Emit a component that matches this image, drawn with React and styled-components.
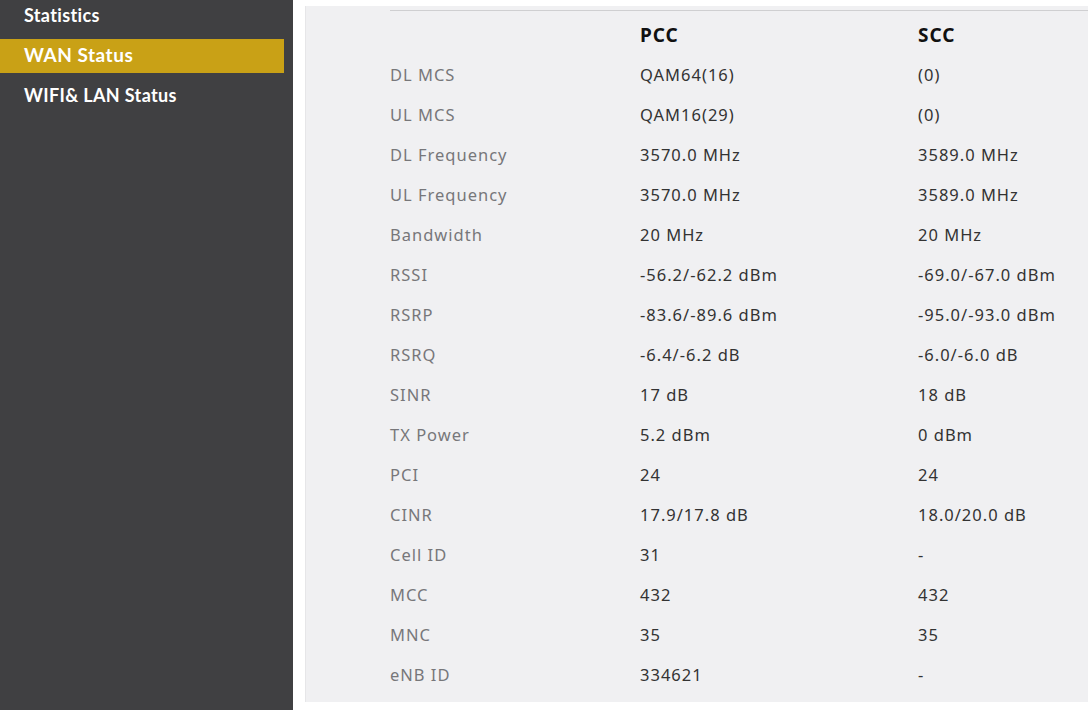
import React from "react";
import styled, { createGlobalStyle } from "styled-components";

const Global = createGlobalStyle`
  html, body {
    margin: 0;
    padding: 0;
    background: #ffffff;
    overflow: hidden;
  }
`;

const Page = styled.div`
  display: flex;
  width: 1088px;
  height: 710px;
  background: #ffffff;
`;

const Sidebar = styled.nav`
  width: 293px;
  flex-shrink: 0;
  background-color: #404042;
  display: flex;
  flex-direction: column;
  gap: 6px;
  padding-right: 9px;
  box-sizing: border-box;
  margin-top: -1px;
`;

const NavItem = styled.div`
  height: 34px;
  box-sizing: border-box;
  padding: 0 0 ${(p) => (p.active ? "4px" : "2px")} 24px;
  display: flex;
  align-items: center;
  font-family: "Lato", "Liberation Sans", sans-serif;
  font-weight: 700;
  font-size: ${(p) => (p.active ? "19px" : "18px")};
  letter-spacing: ${(p) => (p.active ? "0.5px" : "0.35px")};
  color: #ffffff;
  background-color: ${(p) => (p.active ? "#c9a116" : "transparent")};
`;

const Main = styled.main`
  flex: 1;
  padding: 6px 0 8px 12px;
  display: flex;
`;

const Panel = styled.section`
  flex: 1;
  background-color: #f0f0f2;
  border-left: 1px solid #e6e6e8;
  padding-left: 84px;
  padding-top: 4px;
`;

const Table = styled.div`
  display: grid;
  grid-template-columns: 250px 278px 1fr;
  border-top: 1px solid #cfcfd1;
  font-family: "Noto Sans", "Open Sans", sans-serif;
  font-size: 16.5px;
  letter-spacing: 1px;
`;

const HeadCell = styled.div`
  height: 40px;
  margin-top: 4px;
  display: flex;
  align-items: center;
  font-weight: 700;
  font-size: 19px;
  letter-spacing: 1px;
  color: #111111;
`;

const Label = styled.div`
  height: 40px;
  box-sizing: border-box;
  padding-bottom: 2px;
  display: flex;
  align-items: center;
  color: #77777a;
`;

const Value = styled.div`
  height: 40px;
  box-sizing: border-box;
  padding-bottom: 2px;
  display: flex;
  align-items: center;
  color: #333333;
`;

const rows = [
  ["DL MCS", "QAM64(16)", "(0)"],
  ["UL MCS", "QAM16(29)", "(0)"],
  ["DL Frequency", "3570.0 MHz", "3589.0 MHz"],
  ["UL Frequency", "3570.0 MHz", "3589.0 MHz"],
  ["Bandwidth", "20 MHz", "20 MHz"],
  ["RSSI", "-56.2/-62.2 dBm", "-69.0/-67.0 dBm"],
  ["RSRP", "-83.6/-89.6 dBm", "-95.0/-93.0 dBm"],
  ["RSRQ", "-6.4/-6.2 dB", "-6.0/-6.0 dB"],
  ["SINR", "17 dB", "18 dB"],
  ["TX Power", "5.2 dBm", "0 dBm"],
  ["PCI", "24", "24"],
  ["CINR", "17.9/17.8 dB", "18.0/20.0 dB"],
  ["Cell ID", "31", "-"],
  ["MCC", "432", "432"],
  ["MNC", "35", "35"],
  ["eNB ID", "334621", "-"],
];

const App = () => {
  return (
    <Page>
      <Global />
      <Sidebar>
        <NavItem>Statistics</NavItem>
        <NavItem active>WAN Status</NavItem>
        <NavItem>WIFI&amp; LAN Status</NavItem>
      </Sidebar>
      <Main>
        <Panel>
          <Table>
            <HeadCell />
            <HeadCell>PCC</HeadCell>
            <HeadCell>SCC</HeadCell>
            {rows.map(([name, pcc, scc]) => (
              <React.Fragment key={name}>
                <Label>{name}</Label>
                <Value>{pcc}</Value>
                <Value>{scc}</Value>
              </React.Fragment>
            ))}
          </Table>
        </Panel>
      </Main>
    </Page>
  );
};

export default App;
